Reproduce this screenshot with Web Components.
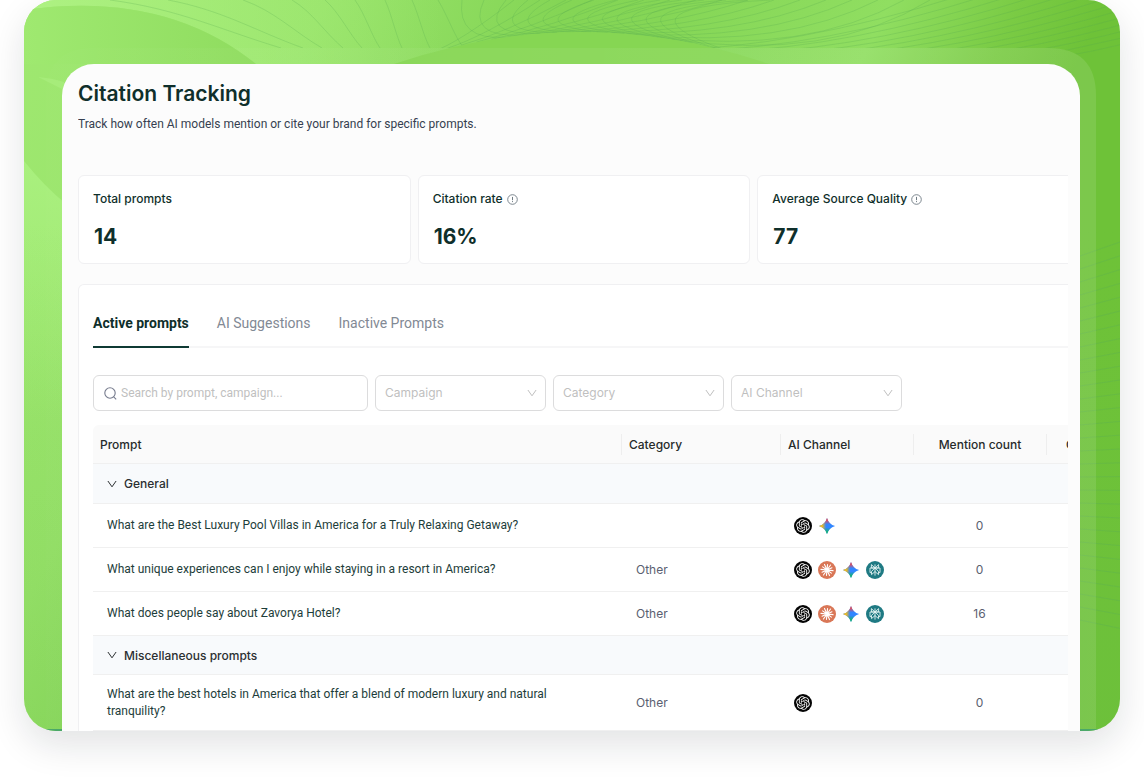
<!DOCTYPE html>
<html lang="en">
<head>
<meta charset="utf-8">
<title>Citation Tracking</title>
<style>
html, body { margin: 0; background: #fff; }
body { font-family: Inter, "Liberation Sans", sans-serif; font-size: 12px; color: #0f2f2b; overflow-x: hidden; --prose: Roboto, Inter, sans-serif; }
</style>
</head>
<body>
<brand-stage>
  <tracking-page></tracking-page>
</brand-stage>

<script>
const define = (name, html, setup) => {
  const tpl = document.createElement('template');
  tpl.innerHTML = html;
  customElements.define(name, class extends HTMLElement {
    connectedCallback() {
      if (this.shadowRoot) return;
      const root = this.attachShadow({ mode: 'open' });
      root.append(tpl.content.cloneNode(true));
      if (setup) setup(root, this);
    }
  });
};

/* Green backdrop with flowing contour lines */
define('wave-backdrop', `
<style>
:host { display: block; }
svg { display: block; width: 100%; height: 100%; }
</style>
<svg viewBox="0 0 1096 731" preserveAspectRatio="none" aria-hidden="true">
  <defs>
    <linearGradient id="base" gradientUnits="userSpaceOnUse" x1="0" y1="0" x2="868" y2="434"><stop offset="0" stop-color="#9fe870"/><stop offset=".28" stop-color="#98e36a"/><stop offset=".5" stop-color="#84d555"/><stop offset=".6" stop-color="#85d656"/><stop offset=".8" stop-color="#90de61"/><stop offset=".92" stop-color="#7acb44"/><stop offset="1" stop-color="#6ec238"/></linearGradient>
    <linearGradient id="fall" x1="0" x2="0" y1="0" y2="1"><stop offset=".3" stop-color="#6bc043" stop-opacity="0"/><stop offset="1" stop-color="#68b945" stop-opacity=".2"/></linearGradient>
    <linearGradient id="shade"><stop offset="0" stop-color="#9fe970"/><stop offset="1" stop-color="#8fdc5f"/></linearGradient>
    <linearGradient id="light" x1="0" x2="0" y1="0" y2="1"><stop offset="0" stop-color="#a9f07e"/><stop offset="1" stop-color="#a9f07e" stop-opacity="0"/></linearGradient>
    <linearGradient id="glow"><stop offset="0" stop-color="#aef283"/><stop offset="1" stop-color="#a4ec77" stop-opacity="0"/></linearGradient>
    <linearGradient id="veil"><stop offset="0" stop-color="#fff" stop-opacity=".01"/><stop offset=".4" stop-color="#fff" stop-opacity=".05"/><stop offset="1" stop-color="#fff" stop-opacity=".1"/></linearGradient>
    <clipPath id="top"><path d="M0 0H1096V240H1072V96Q1072 48 1024 48H0Z"/></clipPath>
  </defs>
  <rect width="1096" height="731" fill="url(#base)"/>
  <path d="M0 0H420V64H232Q140 -10 0 10Z" fill="url(#glow)"/>
  <path d="M0 10Q140 -10 232 64H0Z" fill="url(#shade)"/>
  <path d="M14 77Q28 78 40 82V90Z" fill="#aef283" opacity=".5"/>
  <path d="M0 161Q20 186 42 204V420H0Z" fill="url(#light)"/>
  <rect width="1096" height="731" fill="url(#fall)"/>
  <g id="lines" clip-path="url(#top)" fill="none" stroke="#54a850" stroke-opacity=".24"/>
  <g id="side" fill="none" stroke="#54a860" stroke-opacity=".25"/>
  <path d="M370 64Q557 0 745 64Z" fill="#86d653"/>
  <path d="M22 731V96Q22 48 70 48H1024Q1072 48 1072 96V731Z" fill="url(#veil)"/>
  <path d="M0 730H1096" stroke="#4ba869" stroke-width="2"/>
</svg>`, root => {
  const top = [], side = [];
  const starts = [86, 144, 219, 268, 301, 331, 361, 388, 414];
  const ends = [257, 279, 298, 319, 338, 356, 378, 406, 440];
  starts.forEach((x, i) => {
    const e = ends[i];
    top.push(`M${x} 0C${x + (e - x) * .4} ${9 + i},${x + (e - x) * .65} ${30 + i},${e} 48`);
  });
  /* Lines that leave or join the arch along its tangent */
  const arch = t => ({ x: 370 + 375 * t, y: 64 - 128 * t * (1 - t), k: (256 * t - 128) / 375 });
  for (let i = 0; i < 15; i++) {
    const p = arch(.3 + .045 * i), dx = 50 + i * 7;
    top.push(`M${438 + i * 22} 0Q${p.x - dx} ${p.y - p.k * dx - 3},${p.x} ${p.y}`);
  }
  for (let i = 0; i < 17; i++) {
    const p = arch(.1 + .04 * i), dx = 30 + i * 8;
    top.push(`M${p.x} ${p.y}Q${p.x + dx} ${p.y + p.k * dx - 3},${490 + i * 26} 0`);
  }
  for (let i = 0; i < 14; i++) {
    top.push(`M${640 + i * 28} ${50 + i}Q${770 + i * 28} ${48 - i * .5},${932 + i * 26} -3`);
  }
  for (let i = 0; i < 29; i++) {
    side.push(`M1056 ${256 + i * 13}L1096 ${242 + i * 13 + i * .8}`);
  }
  const draw = list => list.map(p => `<path d="${p}"/>`).join('');
  root.getElementById('lines').innerHTML = draw(top);
  root.getElementById('side').innerHTML = draw(side);
});

/* Rounded stage that frames the application window */
define('brand-stage', `
<style>
:host { display: block; padding: 0 24px 48px; }
.stage { position: relative; display: flex; flex-direction: column; padding: 64px 40px 0 38px; border-radius: 32px; box-shadow: 0 14px 36px rgba(20,25,35,.12); }
wave-backdrop { position: absolute; inset: 0; border-radius: 32px; overflow: hidden; }
.window { position: relative; background: #fcfcfc; border-radius: 32px 32px 0 0; padding: 16px 12px 0 16px; }
</style>
<div class="stage">
  <wave-backdrop></wave-backdrop>
  <main class="window"><slot></slot></main>
</div>`);

define('info-icon', `
<style>:host { display: inline-flex; } svg { display: block; }</style>
<svg width="11" height="11" viewBox="0 0 11 11" fill="none" stroke="#6f7b83" role="img" aria-label="Info"><circle cx="5.5" cy="5.5" r="4.8" stroke-width=".9"/><path d="M5.5 2.9V6.2M5.5 7.1V8.1"/></svg>`);

define('chevron-icon', `
<style>:host { display: inline-flex; } svg { display: block; }</style>
<svg width="10" height="8" viewBox="0 0 10 8" fill="none" stroke="currentColor" aria-hidden="true"><path d="M.9 1L5 6.8L9.1 1"/></svg>`);

define('stat-card', `
<style>
:host { display: block; background: #fff; border: 1px solid #f0f0f2; border-radius: 6px; padding: 14px; }
h2 { margin: 0; display: flex; align-items: center; gap: 4px; font-size: 12px; line-height: 18px; font-weight: 500; }
p { margin: 17px 0 0; padding-left: 1px; font-size: 21px; line-height: 24px; font-weight: 700; }
</style>
<h2><slot name="label"></slot></h2>
<p><slot></slot></p>`);

define('tab-bar', `
<style>
:host { display: block; border-bottom: 2px solid #f6f6f7; }
div { display: flex; gap: 28px; margin-bottom: -2px; }
button { font: 14px/20px var(--prose); color: #828994; background: none; border: 0; border-bottom: 2px solid transparent; padding: 14px 0 13px; }
button[aria-selected="true"] { color: #0f2f2b; font-weight: 700; border-color: #0f3a34; }
</style>
<div role="tablist">
  <button role="tab" aria-selected="true">Active prompts</button>
  <button role="tab" aria-selected="false">AI Suggestions</button>
  <button role="tab" aria-selected="false">Inactive Prompts</button>
</div>`);

define('search-field', `
<style>
:host { display: block; }
label { box-sizing: border-box; height: 36px; display: flex; align-items: center; gap: 4px; padding: 0 10px; border: 1px solid #dcdcdd; border-radius: 6px; background: #fff; }
svg { flex: none; }
input { flex: 1; min-width: 0; font: 12px/18px var(--prose); border: 0; padding: 0; outline: 0; background: none; color: #0f2f2b; }
input::placeholder { color: #bfbfbf; opacity: 1; }
</style>
<label>
  <svg width="13" height="13" viewBox="0 0 13 13" fill="none" stroke="#767b8d" stroke-width="1.1" aria-hidden="true"><circle cx="6" cy="6" r="5.2"/><path d="M9.7 9.8L12.2 12.3"/></svg>
  <input type="search" aria-label="Search prompts" placeholder="Search by prompt, campaign...">
</label>`);

define('filter-select', `
<style>
:host { display: grid; align-items: center; color: #bfbfbf; }
select { grid-area: 1 / 1; width: 100%; height: 36px; appearance: none; font: inherit; line-height: 18px; color: inherit; padding: 0 28px 0 9px; border: 1px solid #dcdcdd; border-radius: 6px; background: #fff; }
chevron-icon { grid-area: 1 / 1; justify-self: end; margin-right: 9px; pointer-events: none; }
</style>
<select><option></option></select>
<chevron-icon></chevron-icon>`, (root, host) => {
  const name = host.getAttribute('name');
  root.querySelector('select').setAttribute('aria-label', name);
  root.querySelector('option').textContent = name;
});

/* Round marks of the AI services */
const rays = Array.from({ length: 12 }, (_, i) => {
  const a = i * Math.PI / 6 + .1, r = i % 2 ? 5.4 : 6.1;
  return `M9 9L${9 + Math.cos(a) * r} ${9 + Math.sin(a) * r}`;
}).join('');
const marks = {
  ChatGPT: `<circle cx="9" cy="9" r="9" fill="#050505"/><path transform="translate(2.2 2.2) scale(.567)" fill="#fff" d="M22.2819 9.8211a5.9847 5.9847 0 0 0-.5157-4.9108 6.0462 6.0462 0 0 0-6.5098-2.9A6.0651 6.0651 0 0 0 4.9807 4.1818a5.9847 5.9847 0 0 0-3.9977 2.9 6.0462 6.0462 0 0 0 .7427 7.0966 5.98 5.98 0 0 0 .511 4.9107 6.051 6.051 0 0 0 6.5146 2.9001A5.9847 5.9847 0 0 0 13.2599 24a6.0557 6.0557 0 0 0 5.7718-4.2058 5.9894 5.9894 0 0 0 3.9977-2.9001 6.0557 6.0557 0 0 0-.7475-7.0729zm-9.022 12.6081a4.4755 4.4755 0 0 1-2.8764-1.0408l.1419-.0804 4.7783-2.7582a.7948.7948 0 0 0 .3927-.6813v-6.7369l2.02 1.1686a.071.071 0 0 1 .038.052v5.5826a4.504 4.504 0 0 1-4.4945 4.4944zm-9.6607-4.1254a4.4708 4.4708 0 0 1-.5346-3.0137l.142.0852 4.783 2.7582a.7712.7712 0 0 0 .7806 0l5.8428-3.3685v2.3324a.0804.0804 0 0 1-.0332.0615L9.74 19.9502a4.4992 4.4992 0 0 1-6.1408-1.6464zM2.3408 7.8956a4.485 4.485 0 0 1 2.3655-1.9728V11.6a.7664.7664 0 0 0 .3879.6765l5.8144 3.3543-2.0201 1.1685a.0757.0757 0 0 1-.071 0l-4.8303-2.7865A4.504 4.504 0 0 1 2.3408 7.872zm16.5963 3.8558L13.1038 8.364 15.1192 7.2a.0757.0757 0 0 1 .071 0l4.8303 2.7913a4.4944 4.4944 0 0 1-.6765 8.1042v-5.6772a.79.79 0 0 0-.407-.667zm2.0107-3.0231l-.142-.0852-4.7735-2.7818a.7759.7759 0 0 0-.7854 0L9.409 9.2297V6.8974a.0662.0662 0 0 1 .0284-.0615l4.8303-2.7866a4.4992 4.4992 0 0 1 6.6802 4.66zM8.3065 12.863l-2.02-1.1638a.0804.0804 0 0 1-.038-.0567V6.0742a4.4992 4.4992 0 0 1 7.3757-3.4537l-.142.0805L8.704 5.459a.7948.7948 0 0 0-.3927.6813zm1.0976-2.3654l2.602-1.4998 2.6069 1.4998v2.9994l-2.5974 1.4997-2.6067-1.4997Z"/>`,
  Claude: `<circle cx="9" cy="9" r="9" fill="#d97757"/><path d="${rays}" stroke="#fff" stroke-width="1.1" stroke-linecap="round"/>`,
  Gemini: `<defs>
    <linearGradient id="r" x1=".5" y1="0" x2=".5" y2="1"><stop offset=".12" stop-color="#f0484a"/><stop offset=".4" stop-color="#f0484a" stop-opacity="0"/></linearGradient>
    <linearGradient id="y" x1="0" y1=".5" x2="1" y2=".5"><stop offset=".2" stop-color="#f4bc1c"/><stop offset=".44" stop-color="#f4bc1c" stop-opacity="0"/></linearGradient>
    <linearGradient id="g" x1=".5" y1="1" x2=".5" y2="0"><stop offset=".12" stop-color="#12b565"/><stop offset=".4" stop-color="#12b565" stop-opacity="0"/></linearGradient>
    <path id="s" d="M9 .9Q10.8 7.2 17.1 9Q10.8 10.8 9 17.1Q7.2 10.8 .9 9Q7.2 7.2 9 .9Z"/></defs>
    <use href="#s" fill="#3186ff"/><use href="#s" fill="url(#y)"/><use href="#s" fill="url(#r)"/><use href="#s" fill="url(#g)"/>`,
  Perplexity: `<circle cx="9" cy="9" r="9" fill="#1f7a83"/><path d="M9 3.4V14.6M5.4 3.6L9 7L12.6 3.6V7H5.4ZM9 7L5.5 10.4V13.6L9 10.6L12.5 13.6V10.4L9 7M5.5 11.6H4V7H14V11.6H12.5" fill="none" stroke="#e3f3f2" stroke-width=".9"/>`
};
define('ai-mark', `<style>:host { display: block; } svg { display: block; }</style><svg width="18" height="18" viewBox="0 0 18 18" role="img"></svg>`, (root, host) => {
  const svg = root.querySelector('svg');
  svg.setAttribute('aria-label', host.getAttribute('name'));
  svg.innerHTML = marks[host.getAttribute('name')];
});

define('prompt-table', `
<style>
:host { display: block; }
table { width: calc(100% + 90px); table-layout: fixed; border-collapse: separate; border-spacing: 0; font-size: 12px; line-height: 17px; }
.category { width: 159px; }
.metric { width: 133px; }
.last { width: 119px; }
th, td { box-sizing: border-box; text-align: left; font-weight: 400; padding: 0 14px; border-bottom: 1px solid #f0f0f0; }
th { color: #262b2b; }
thead th { height: 39px; padding: 0; background: #fafafa; font-weight: 500; }
thead th:first-child { border-top-left-radius: 6px; }
thead span { display: block; padding: 2px 7px; border-left: 1px solid #eee; }
thead th:first-child span { border-color: transparent; padding-left: 6px; }
tbody td { height: 44px; background: #fff; }
td:first-child { font-family: var(--prose); }
.group th { height: 39px; background: #f8fafc; font-weight: 500; }
.group:first-child th { height: 40px; }
tr:last-child td { height: 56px; }
.group button { display: flex; align-items: center; gap: 7px; padding: 0; border: 0; background: none; font: inherit; color: #2b2f31; }
tbody .other { color: #5a6070; padding-left: 15px; }
.num, thead th.num { text-align: center; color: #5a6070; }
thead th.num { color: #262b2b; }
.marks { display: flex; gap: 6px; }
a { color: #1d3d3a; text-decoration: none; }
</style>
<table>
  <colgroup><col><col class="category"><col class="metric"><col class="metric"><col class="last"></colgroup>
  <thead><tr><th scope="col"><span>Prompt</span></th><th scope="col"><span>Category</span></th><th scope="col"><span>AI Channel</span></th><th scope="col" class="num"><span>Mention count</span></th><th scope="col" class="num"><span>Citation count</span></th></tr></thead>
  <tbody></tbody>
</table>`, root => {
  const groups = [
    ['General', [
      ['What are the Best Luxury Pool Villas in America for a Truly Relaxing Getaway?', '', ['ChatGPT', 'Gemini'], 0],
      ['What unique experiences can I enjoy while staying in a resort in America?', 'Other', ['ChatGPT', 'Claude', 'Gemini', 'Perplexity'], 0],
      ['What does people say about Zavorya Hotel?', 'Other', ['ChatGPT', 'Claude', 'Gemini', 'Perplexity'], 16]
    ]],
    ['Miscellaneous prompts', [
      ['What are the best hotels in America that offer a blend of modern luxury and natural tranquility?', 'Other', ['ChatGPT'], 0]
    ]]
  ];
  root.querySelector('tbody').innerHTML = groups.map(([title, rows]) =>
    `<tr class="group"><th colspan="5" scope="rowgroup"><button aria-expanded="true"><chevron-icon></chevron-icon>${title}</button></th></tr>` +
    rows.map(([text, cat, ais, n]) =>
      `<tr><td><a href="#">${text}</a></td><td class="other">${cat}</td><td><div class="marks">${ais.map(a => `<ai-mark name="${a}"></ai-mark>`).join('')}</div></td><td class="num">${n}</td><td></td></tr>`).join('')
  ).join('');
});

define('tracking-page', `
<style>
:host { display: block; overflow: hidden; }
h1 { margin: 0; font-size: 21px; line-height: 28px; font-weight: 600; }
.sub { margin: 7px 0 0; font: 12px/18px var(--prose); color: #363f50; }
.wide { width: calc(100% + 22px); }
.stats { display: grid; grid-template-columns: repeat(3, 1fr); gap: 7px; margin-top: 42px; }
.panel { box-sizing: border-box; margin-top: 20px; padding: 14px 14px 0; background: #fff; border: 1px solid #f0f0f2; border-bottom: 0; border-radius: 6px 6px 0 0; }
.filters { display: grid; grid-template-columns: 275px repeat(3, 171px); gap: 7px; margin: 27px 0 14px; }
</style>
<header><h1>Citation Tracking</h1><p class="sub">Track how often AI models mention or cite your brand for specific prompts.</p></header>
<section class="wide stats">
  <stat-card><span slot="label">Total prompts</span>14</stat-card>
  <stat-card><span slot="label">Citation rate</span><info-icon slot="label"></info-icon>16%</stat-card>
  <stat-card><span slot="label">Average Source Quality</span><info-icon slot="label"></info-icon>77</stat-card>
</section>
<section class="wide panel">
  <tab-bar></tab-bar>
  <div class="filters">
    <search-field></search-field>
    <filter-select name="Campaign"></filter-select>
    <filter-select name="Category"></filter-select>
    <filter-select name="AI Channel"></filter-select>
  </div>
  <prompt-table></prompt-table>
</section>`);
</script>
</body>
</html>
